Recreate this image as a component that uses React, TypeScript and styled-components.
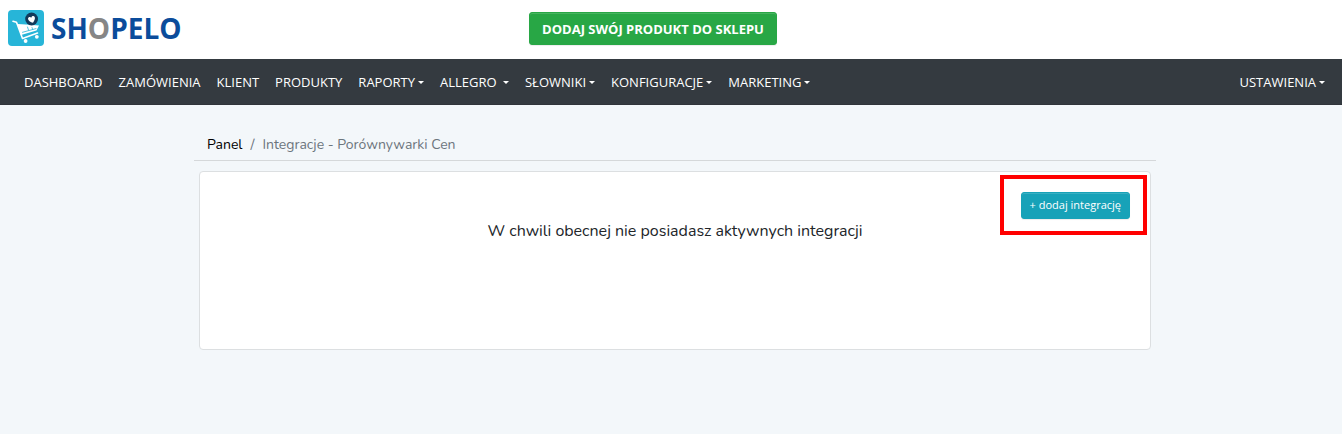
import React from 'react';
import styled, { createGlobalStyle } from 'styled-components';

const GlobalStyle = createGlobalStyle`
  *, *::before, *::after { box-sizing: border-box; }
  body {
    margin: 0;
    background: #f3f7fa;
    color: #212529;
    font-family: Nunito, Lato, sans-serif;
    font-size: 16px;
    line-height: 24px;
  }
`;

const Header = styled.header`
  display: grid;
  grid-template-columns: 1fr auto 1fr;
  align-items: center;
  padding: 10px 36px 13px 0;
  background: #fff;
`;

const Brand = styled.a`
  display: flex;
  align-items: center;
  gap: 7px;
  margin-left: 8px;
  justify-self: start;
  color: #0b4c9b;
  font: 700 28px/36px "Open Sans", sans-serif;
  text-decoration: none;

  svg { display: block; }
`;

const BrandAccent = styled.span`
  color: #868686;
`;

const Button = styled.button<{ $large?: boolean }>`
  display: block;
  padding: ${(p) => (p.$large ? '1px 12px 0' : '0 8px 1px')};
  border: 1px solid ${(p) => (p.$large ? '#28a745' : '#17a2b8')};
  border-radius: 3px;
  background: ${(p) => (p.$large ? '#28a745' : '#17a2b8')};
  box-shadow: inset 0 1px 0 rgba(255, 255, 255, 0.15), 0 1px 1px rgba(0, 0, 0, 0.075);
  color: #fff;
  font-family: "Open Sans", sans-serif;
  font-size: ${(p) => (p.$large ? '13px' : '11px')};
  font-weight: ${(p) => (p.$large ? 700 : 400)};
  line-height: ${(p) => (p.$large ? '30px' : '24px')};
  white-space: nowrap;
  cursor: pointer;
`;

const Navbar = styled.nav`
  display: flex;
  justify-content: space-between;
  padding: 13px 9px 12px 16px;
  border-bottom: 1px solid #30343a;
  background: #343a40;
`;

const NavList = styled.ul`
  display: flex;
  flex-wrap: wrap;
  margin: 0;
  padding: 0;
  list-style: none;
`;

const NavLink = styled.a`
  display: flex;
  align-items: center;
  padding: 0 8px;
  color: #fff;
  font: 400 13px/20px "Open Sans", sans-serif;
  text-decoration: none;
  white-space: pre;
`;

const Caret = styled.span`
  margin-left: 3px;
  border: 3px solid transparent;
  border-top-color: currentColor;
  border-bottom: 0;
`;

const Main = styled.main`
  padding: 28px 0 32px 8px;
`;

const Container = styled.div`
  max-width: 962px;
  margin: 0 auto;
`;

const Breadcrumb = styled.ol`
  display: flex;
  margin: 0 0 10px;
  padding: 0 13px 3px;
  border-bottom: 1px solid #d5d8da;
  font-size: 14px;
  list-style: none;
`;

const Crumb = styled.li`
  color: #6c757d;

  & + &::before {
    content: '/';
    padding: 0 8px;
  }

  a {
    color: #000;
    text-decoration: none;
  }
`;

const Card = styled.section`
  display: grid;
  min-height: 179px;
  margin: 0 5px;
  padding: 3px;
  border: 1px solid #dcdfe1;
  border-radius: 4px;
  background: #fff;
`;

const EmptyMessage = styled.p`
  grid-area: 1 / 1;
  margin: 44px 0 0;
  text-align: center;
`;

const Highlight = styled.div`
  grid-area: 1 / 1;
  place-self: start end;
  padding: 13px 13px 12px 17px;
  border: 4px solid #f00;
`;

const CartLogo = () => (
  <svg width="36" height="36" viewBox="0 0 36 36" aria-hidden="true">
    <rect width="36" height="36" rx="4" fill="#27b5d8" />
    <path d="M9.5 14 18 14.5 31 15.5 28.5 20.5 13 25Z" fill="#fff" />
    <g fill="none" strokeLinecap="round" strokeLinejoin="round">
      <path d="M5 11.2 8.5 12.2 14.5 28.5 29.5 23" stroke="#fff" strokeWidth="1.6" />
      <path d="M19.5 17 20.5 20M24 17.5 24.7 19.5M14.5 22.3 28 18.6" stroke="#27b5d8" strokeWidth="0.8" />
    </g>
    <circle cx="17.6" cy="31" r="1.9" fill="#fff" />
    <circle cx="28.8" cy="26.8" r="1.9" fill="#fff" />
    <circle cx="23.6" cy="9" r="6.4" fill="#12395a" />
    <path d="M25 12.8C22.5 12 20 10.6 20 8.7c.1-1.8 2.3-2.2 3.3-1 .2-1.8 2.6-2.3 3.4-.7.8 1.7-.5 4-1.7 5.8Z" fill="#fff" />
  </svg>
);

const menu = [
  { label: 'DASHBOARD' },
  { label: 'ZAMÓWIENIA' },
  { label: 'KLIENT' },
  { label: 'PRODUKTY' },
  { label: 'RAPORTY', dropdown: true },
  { label: 'ALLEGRO ', dropdown: true },
  { label: 'SŁOWNIKI', dropdown: true },
  { label: 'KONFIGURACJE', dropdown: true },
  { label: 'MARKETING', dropdown: true },
];

const NavItem = ({ label, dropdown }: { label: string; dropdown?: boolean }) => (
  <li>
    <NavLink href="#">
      {label}
      {dropdown && <Caret />}
    </NavLink>
  </li>
);

export default function App() {
  return (
    <>
      <GlobalStyle />
      <Header>
        <Brand href="#">
          <CartLogo />
          <span>SH<BrandAccent>O</BrandAccent>PELO</span>
        </Brand>
        <Button type="button" $large>DODAJ SWÓJ PRODUKT DO SKLEPU</Button>
      </Header>
      <Navbar>
        <NavList>
          {menu.map((item) => <NavItem key={item.label} {...item} />)}
        </NavList>
        <NavList>
          <NavItem label="USTAWIENIA" dropdown />
        </NavList>
      </Navbar>
      <Main>
        <Container>
          <nav aria-label="Breadcrumb">
            <Breadcrumb>
              <Crumb><a href="#">Panel</a></Crumb>
              <Crumb aria-current="page">Integracje - Porównywarki Cen</Crumb>
            </Breadcrumb>
          </nav>
          <Card>
            <EmptyMessage>W chwili obecnej nie posiadasz aktywnych integracji</EmptyMessage>
            <Highlight>
              <Button type="button">+ dodaj integrację</Button>
            </Highlight>
          </Card>
        </Container>
      </Main>
    </>
  );
}
